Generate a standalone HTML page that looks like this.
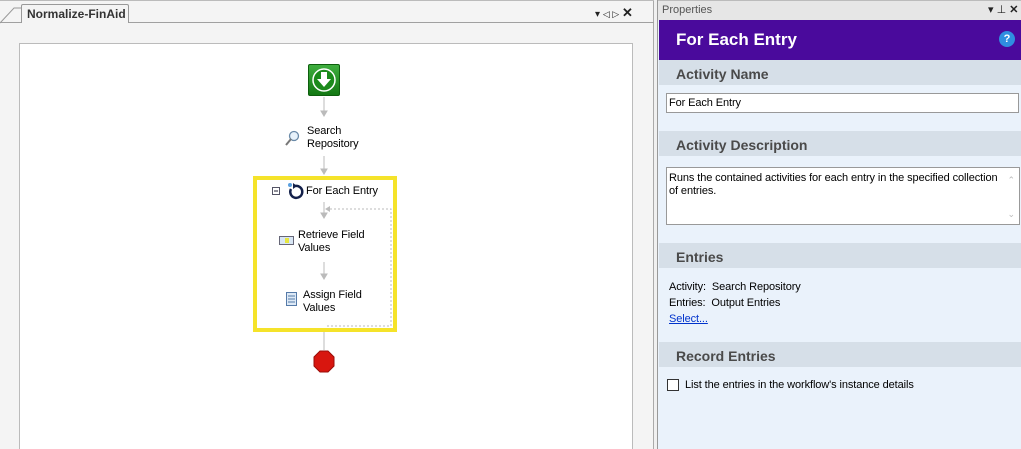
<!DOCTYPE html>
<html><head><style>
*{margin:0;padding:0;box-sizing:border-box}
body{width:1021px;height:449px;overflow:hidden;background:#f0f0f0;font-family:"Liberation Sans",Arial,sans-serif;position:relative;font-size:12px;color:#000}
.a{position:absolute}
.t{font-size:11px;letter-spacing:-0.1px;line-height:13px}
.bar{position:absolute;left:659px;width:362px;height:25px;background:#d6dfe8;color:#4a4a4a;font-weight:bold;font-size:14px;padding:6px 0 0 17px}
</style></head><body>
<div class="a" style="left:0;top:0;width:654px;height:449px;background:#f4f4f4;border-right:1px solid #aaa"></div>
<div class="a" style="left:0;top:22px;width:654px;height:1px;background:#a0a0a0"></div>
<div class="a" style="left:0;top:0;width:654px;height:1px;background:#bbb"></div>
<svg class="a" style="left:0;top:4px" width="30" height="20"><path d="M0 19 L14 4 L22 4" stroke="#999" fill="none"/></svg>
<div class="a" style="left:21px;top:4px;width:108px;height:19px;background:#f4f4f4;border:1px solid #999;border-bottom:none;border-radius:2px 2px 0 0;font-weight:bold;font-size:12px;color:#333;padding:2px 0 0 5px">Normalize-FinAid</div>
<div class="a" style="left:595px;top:5px;font-size:10px;color:#222">▾ <span style="font-size:9px">◁ ▷</span> <b style="font-size:13px">✕</b></div>
<div class="a" style="left:19px;top:43px;width:614px;height:406px;background:#fff;border:1px solid #bbb;border-bottom:none"></div>
<div class="a" style="left:308px;top:64px;width:32px;height:32px;background:linear-gradient(#3fae3f,#137813);border:1px solid #0d5e0d;border-radius:2px"></div>
<svg class="a" style="left:308px;top:64px" width="32" height="32"><circle cx="16" cy="16" r="11" fill="#1b8a1b" stroke="#fff" stroke-width="1.5"/><path d="M13 8h6v7h4l-7 8-7-8h4z" fill="#fff"/></svg>
<svg class="a" style="left:0;top:0" width="654" height="449">
<g stroke="#bbb" fill="#bbb">
<line x1="324" y1="97" x2="324" y2="114"/><path d="M321 111l3 5 3-5z"/>
<line x1="324" y1="156" x2="324" y2="172"/><path d="M321 169l3 5 3-5z"/>
<line x1="324" y1="202" x2="324" y2="216"/><path d="M321 213l3 5 3-5z"/>
<line x1="324" y1="262" x2="324" y2="277"/><path d="M321 274l3 5 3-5z"/>
<line x1="324" y1="332" x2="324" y2="350"/>
</g>
<path d="M330 209H391V326H326" stroke="#bbb" fill="none" stroke-dasharray="2,2"/><path d="M330 206l-5 3 5 3z" fill="#bbb"/>
<rect x="255" y="178" width="140" height="152" fill="none" stroke="#f5e32a" stroke-width="4"/>
<circle cx="294" cy="136" r="4.5" fill="#e8f2fb" stroke="#6a8aa8" stroke-width="1.3"/><line x1="291" y1="139" x2="286" y2="145" stroke="#777" stroke-width="2"/>
<rect x="272.5" y="187.5" width="7" height="7" fill="#fff" stroke="#556"/><line x1="274" y1="191" x2="278" y2="191" stroke="#223"/>
<path d="M291 189a6 6 0 1 0 4-3" stroke="#13204a" stroke-width="2.5" fill="none"/><path d="M293 183l4 3-4 3z" fill="#13204a"/><circle cx="290" cy="185" r="2" fill="#5aa0e0"/>
<rect x="279.5" y="236.5" width="14" height="8" fill="#d8e6f4" stroke="#667"/><rect x="285" y="238" width="4" height="5" fill="#e6e640"/>
<rect x="286.5" y="292.5" width="10" height="13" fill="#dde9f6" stroke="#557aa8"/><g stroke="#557aa8"><line x1="288" y1="296" x2="295" y2="296"/><line x1="288" y1="299" x2="295" y2="299"/><line x1="288" y1="302" x2="295" y2="302"/></g>
<polygon points="320,351 328,351 334,357 334,366 328,372 320,372 314,366 314,357" fill="#d8160f" stroke="#9a0c08"/>
</svg>
<div class="a t" style="left:307px;top:125px">Search<br>Repository</div>
<div class="a t" style="left:306px;top:185px">For Each Entry</div>
<div class="a t" style="left:298px;top:229px">Retrieve Field<br>Values</div>
<div class="a t" style="left:303px;top:289px">Assign Field<br>Values</div>
<div class="a" style="left:657px;top:0;width:364px;height:449px;background:#eaf2fb;border-left:1px solid #999"></div>
<div class="a" style="left:658px;top:0;width:363px;height:20px;background:#e6e6e6;border-top:1px solid #bbb;color:#555;font-size:11px;padding:3px 0 0 4px">Properties<span style="position:absolute;left:330px;top:2px;color:#222">▾ ⊥ <b>✕</b></span></div>
<div class="a" style="left:659px;top:20px;width:362px;height:40px;background:#4a0a9c;color:#fff;font-weight:bold;font-size:17px;padding:10px 0 0 17px">For Each Entry</div>
<div class="a" style="left:999px;top:31px;width:16px;height:16px;border-radius:50%;background:#2f8ee0;color:#fff;font-size:11px;font-weight:bold;text-align:center;line-height:16px">?</div>
<div class="bar" style="top:60px">Activity Name</div>
<div class="a t" style="left:666px;top:93px;width:353px;height:20px;background:#fff;border:1px solid #999;padding:3px 2px">For Each Entry</div>
<div class="bar" style="top:131px">Activity Description</div>
<div class="a t" style="left:666px;top:167px;width:354px;height:58px;background:#fff;border:1px solid #999;padding:4px 16px 0 2px">Runs the contained activities for each entry in the specified collection of entries.<span style="position:absolute;right:4px;top:6px;color:#bbb;font-size:9px">⌃</span><span style="position:absolute;right:4px;top:40px;color:#bbb;font-size:9px">⌄</span></div>
<div class="bar" style="top:243px">Entries</div>
<div class="a t" style="left:669px;top:279px;line-height:16px">Activity:&nbsp; Search Repository<br>Entries:&nbsp; Output Entries<br><span style="color:#0033cc;text-decoration:underline">Select...</span></div>
<div class="bar" style="top:342px">Record Entries</div>
<div class="a" style="left:667px;top:379px;width:12px;height:12px;background:#fff;border:1px solid #333"></div>
<div class="a t" style="left:685px;top:379px">List the entries in the workflow's instance details</div>
</body></html>
